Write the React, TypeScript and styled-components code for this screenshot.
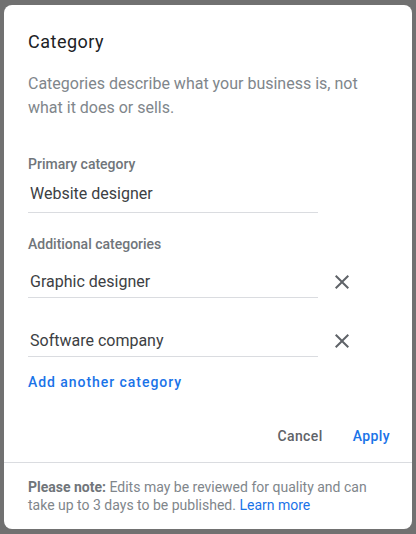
import React from "react";
import styled, { createGlobalStyle } from "styled-components";

const GlobalStyle = createGlobalStyle`
  html, body {
    margin: 0;
    padding: 0;
    background: #717171;
  }
  * {
    box-sizing: border-box;
  }
`;

const Backdrop = styled.div`
  width: 416px;
  height: 534px;
  background: #717171;
  padding: 5px 4px;
  font-family: Roboto, "Liberation Sans", Arial, sans-serif;
`;

const Dialog = styled.div`
  width: 408px;
  height: 524px;
  background: #ffffff;
  border-radius: 8px;
  display: flex;
  flex-direction: column;
  overflow: hidden;
`;

const Body = styled.div`
  padding: 25px 24px 0 24px;
  display: flex;
  flex-direction: column;
`;

const Title = styled.div`
  font-size: 18px;
  line-height: 24px;
  color: #202124;
  letter-spacing: 0.5px;
`;

const Desc = styled.div`
  margin-top: 18px;
  font-size: 16px;
  line-height: 24px;
  color: #80868b;
`;

const Label = styled.div<{ $top: number }>`
  margin-top: ${(p) => p.$top}px;
  font-size: 14px;
  line-height: 20px;
  font-weight: 500;
  color: #70757a;
`;

const Row = styled.div<{ $top: number }>`
  margin-top: ${(p) => p.$top}px;
  display: flex;
  align-items: flex-end;
  gap: 12px;
`;

const Field = styled.div<{ $padTop: number; $padBottom: number }>`
  width: 290px;
  padding: ${(p) => p.$padTop}px 0 ${(p) => p.$padBottom}px 2px;
  font-size: 16px;
  line-height: 24px;
  color: #3c4043;
  border-bottom: 1px solid #dadce0;
`;

const RemoveButton = styled.button`
  width: 24px;
  height: 24px;
  padding: 0;
  border: none;
  background: none;
  margin-bottom: 4px;
  display: flex;
  align-items: center;
  justify-content: center;
  cursor: pointer;
`;

const AddLink = styled.div`
  margin-top: 15px;
  font-size: 14px;
  line-height: 20px;
  font-weight: 500;
  letter-spacing: 0.95px;
  color: #1a73e8;
  cursor: pointer;
`;

const Actions = styled.div`
  margin-top: 34px;
  display: flex;
  justify-content: flex-end;
  gap: 14px;
  padding-right: 14px;
  height: 20px;
  align-items: center;
`;

const TextButton = styled.button<{ $primary?: boolean }>`
  border: none;
  background: none;
  padding: 0 8px;
  font-family: Roboto, "Liberation Sans", Arial, sans-serif;
  font-size: 14px;
  font-weight: 500;
  letter-spacing: 0.4px;
  color: ${(p) => (p.$primary ? "#1a73e8" : "#5f6368")};
  cursor: pointer;
`;

const Divider = styled.div`
  margin-top: 16px;
  height: 1px;
  background: #dadce0;
`;

const Note = styled.p`
  margin: 0;
  padding: 15px 24px 0 24px;
  font-size: 14px;
  line-height: 18px;
  color: #80868b;
`;

const NoteStrong = styled.strong`
  font-weight: 700;
  color: #70757a;
`;

const NoteLink = styled.a`
  color: #1a73e8;
  text-decoration: none;
`;

function CloseIcon() {
  return (
    <svg width="24" height="24" viewBox="0 0 24 24" fill="#5f6368">
      <path d="M19 6.41L17.59 5 12 10.59 6.41 5 5 6.41 10.59 12 5 17.59 6.41 19 12 13.41 17.59 19 19 17.59 13.41 12z" />
    </svg>
  );
}

export default function App() {
  const additional = ["Graphic designer", "Software company"];

  return (
    <>
      <GlobalStyle />
      <Backdrop>
        <Dialog>
          <Body>
            <Title>Category</Title>
            <Desc>
              Categories describe what your business is, not what it does or
              sells.
            </Desc>
            <Label $top={34}>Primary category</Label>
            <Row $top={0}>
              <Field $padTop={8} $padBottom={6}>
                Website designer
              </Field>
            </Row>
            <Label $top={21}>Additional categories</Label>
            {additional.map((name, i) => (
              <Row key={name} $top={i === 0 ? 16 : 31}>
                <Field $padTop={0} $padBottom={3}>
                  {name}
                </Field>
                <RemoveButton aria-label="Remove">
                  <CloseIcon />
                </RemoveButton>
              </Row>
            ))}
            <AddLink>Add another category</AddLink>
          </Body>
          <Actions>
            <TextButton>Cancel</TextButton>
            <TextButton $primary>Apply</TextButton>
          </Actions>
          <Divider />
          <Note>
            <NoteStrong>Please note:</NoteStrong> Edits may be reviewed for
            quality and can take up to 3 days to be published.{" "}
            <NoteLink href="#">Learn more</NoteLink>
          </Note>
        </Dialog>
      </Backdrop>
    </>
  );
}
